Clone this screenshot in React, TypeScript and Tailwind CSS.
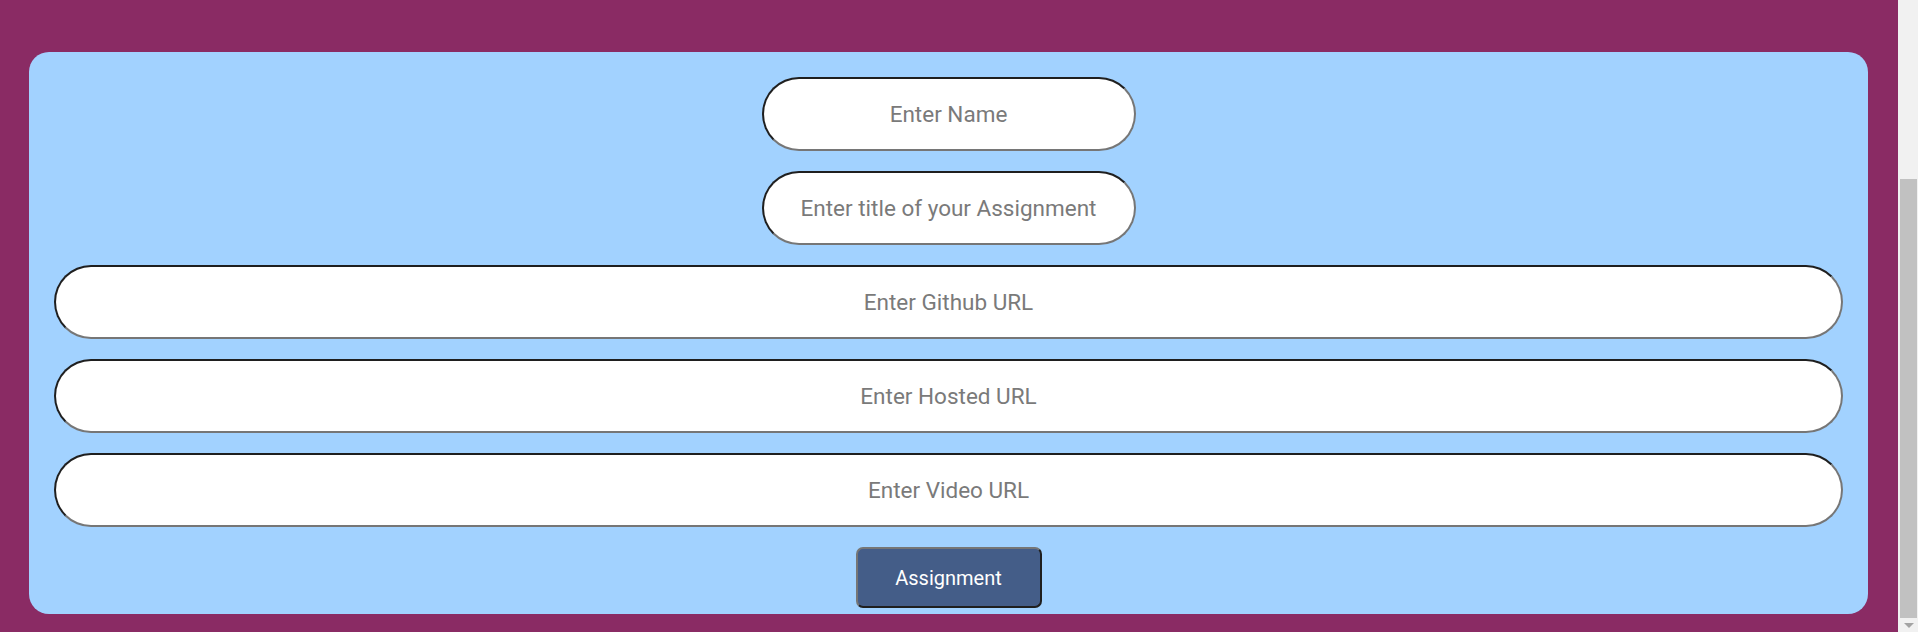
import React from "react";

const inputBase =
  "h-[74px] rounded-full bg-white border-2 border-t-[#1f1f1f] border-l-[#1f1f1f] border-b-[#767676] border-r-[#767676] text-center text-[22.5px] text-[#333] placeholder:text-[#7a7a7a] outline-none font-['Roboto',sans-serif]";

export default function App() {
  return (
    <div className="flex h-[632px] w-[1918px] overflow-hidden font-['Roboto',sans-serif]">
      <div className="flex-1 bg-[#8a2b64] pl-[29px] pr-[30px] pt-[52px]">
        <form
          className="flex flex-col items-center gap-[20px] rounded-[20px] bg-[#a2d2ff] px-[25px] pt-[25px] pb-[6px]"
          onSubmit={(e) => e.preventDefault()}
        >
          <input className={`${inputBase} w-[374px]`} placeholder="Enter Name" />
          <input className={`${inputBase} w-[374px]`} placeholder="Enter title of your Assignment" />
          <input className={`${inputBase} w-full`} placeholder="Enter Github URL" />
          <input className={`${inputBase} w-full`} placeholder="Enter Hosted URL" />
          <input className={`${inputBase} w-full`} placeholder="Enter Video URL" />
          <button
            type="submit"
            className="h-[61px] w-[186px] rounded-[7px] border-2 border-t-[#767676] border-l-[#767676] border-b-[#1f1f1f] border-r-[#1f1f1f] bg-[#445d88] text-[20px] text-white font-['Roboto',sans-serif]"
          >
            Assignment
          </button>
        </form>
      </div>
      <div className="flex w-[20px] flex-col bg-[#f1f1f1]">
        <div className="ml-[2px] mt-[179px] h-[439px] w-[17px] bg-[#c1c1c1]" />
        <div className="flex flex-1 items-center justify-center pl-[2px]">
          <svg width="10" height="5" viewBox="0 0 10 5">
            <polygon points="0,0 10,0 5,5" fill="#a3a3a3" />
          </svg>
        </div>
      </div>
    </div>
  );
}
